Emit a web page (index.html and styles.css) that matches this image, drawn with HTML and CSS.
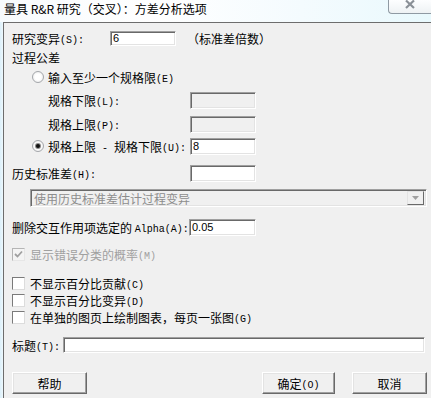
FILE: index.html
```html
<!DOCTYPE html>
<html>
<head>
    <meta charset="UTF-8">
    <title>方差分析选项</title>
    <link rel="stylesheet" href="styles.css">
</head>
<body>

<div class="titlebar">
    <div class="title">量具 R&amp;R 研究（交叉）：方差分析选项</div>
    <div class="close">
        <svg width="12" height="9" viewBox="0 0 12 9"><path d="M2 0.5 L10 8 M10 0.5 L2 8" stroke="#8a9097" stroke-width="2.2" fill="none"/></svg>
    </div>
</div>

<div class="dialog">
    <div class="row study">
        <span class="lbl w98">研究变异<span class="k">(S):</span></span>
        <input class="field short" type="text" value="6">
        <span class="hint">（标准差倍数）</span>
    </div>

    <div class="row tol">过程公差</div>

    <div class="row opt1">
        <span class="radio"></span>
        <span>输入至少一个规格限<span class="k">(E)</span></span>
    </div>
    <div class="row lsl indent">
        <span class="lbl w142">规格下限<span class="k">(L):</span></span>
        <input class="field" type="text" disabled>
    </div>
    <div class="row usl indent">
        <span class="lbl w142">规格上限<span class="k">(P):</span></span>
        <input class="field" type="text" disabled>
    </div>
    <div class="row opt2">
        <span class="radio on"></span>
        <span class="lbl w142">规格上限<span class="k"> - </span>规格下限<span class="k">(U):</span></span>
        <input class="field" type="text" value="8">
    </div>

    <div class="row hist">
        <span class="lbl w178">历史标准差<span class="k">(H):</span></span>
        <input class="field" type="text">
    </div>
    <div class="row pick">
        <div class="combo">
            <span class="combo-text">使用历史标准差估计过程变异</span>
            <span class="drop">
                <svg width="7" height="4" viewBox="0 0 7 4"><path d="M0 0 H7 L3.5 4 Z" fill="#a0a0a0"/></svg>
            </span>
        </div>
    </div>

    <div class="row alpha">
        <span class="lbl w177">删除交互作用项选定的 <span class="k">Alpha(A):</span></span>
        <input class="field wide" type="text" value="0.05">
    </div>

    <div class="row misclass off">
        <span class="box">
            <svg width="9" height="9" viewBox="0 0 9 9"><path d="M1 4 L3.5 6.5 L8 1.5" stroke="#a0a0a0" stroke-width="1.8" fill="none"/></svg>
        </span>
        <span>显示错误分类的概率<span class="k">(M)</span></span>
    </div>

    <div class="row chk first">
        <span class="box"></span>
        <span>不显示百分比贡献<span class="k">(C)</span></span>
    </div>
    <div class="row chk">
        <span class="box"></span>
        <span>不显示百分比变异<span class="k">(D)</span></span>
    </div>
    <div class="row chk">
        <span class="box"></span>
        <span>在单独的图页上绘制图表，每页一张图<span class="k">(G)</span></span>
    </div>

    <div class="row caption">
        <span class="lbl w51">标题<span class="k">(T):</span></span>
        <input class="field long" type="text">
    </div>

    <div class="row buttons">
        <button class="btn">帮助</button>
        <button class="btn ok">确定<span class="k">(O)</span></button>
        <button class="btn">取消</button>
    </div>
</div>

</body>
</html>
```

FILE: styles.css
```css
* {
    box-sizing: border-box;
}
body {
    margin: 0;
    width: 431px;
    height: 398px;
    overflow: hidden;
    background: linear-gradient(90deg, #dcf0fa, #f3fbfe 4px);
    font-family: "Noto Sans CJK SC", sans-serif;
    font-size: 12px;
    color: #000;
}
.titlebar {
    display: flex;
    height: 22px;
    background: linear-gradient(90deg, #f7fbfd 0%, #ffffff 35%, #f4fbfe 70%, #e9f9fd 100%);
}
.title {
    padding-left: 4px;
    line-height: 17px;
}
.close {
    margin-left: auto;
    width: 43px;
    height: 14px;
    border-left: 1px solid #8f9aa3;
    border-bottom: 1px solid #8f9aa3;
    border-bottom-left-radius: 4px;
    background: linear-gradient(#fdfeff, #eef2f4);
    display: flex;
    justify-content: center;
}
.dialog {
    margin-left: 3px;
    height: 376px;
    border-left: 1px solid #6d6d6d;
    border-top: 1px solid #6d6d6d;
    background: #f0f0f0;
    padding: 0 4px 0 8px;
}
.row {
    display: flex;
    align-items: center;
    height: 18px;
    white-space: nowrap;
}
.k {
    font-family: "Liberation Mono", monospace;
    font-size: 10px;
    vertical-align: 1px;
}
.lbl {
    flex: none;
}
.w98 { width: 98px; }
.w142 { width: 142px; }
.w178 { width: 178px; }
.w177 { width: 177px; }
.w51 { width: 51px; }

.study { margin-top: 6px; }
.tol { margin-top: 1px; }
.opt1 { margin-top: 2px; }
.lsl { margin-top: 5px; }
.usl { margin-top: 6px; }
.opt2 { margin-top: 4px; }
.hist { margin-top: 9px; }
.pick { margin-top: 7px; }
.alpha { margin-top: 11px; }
.misclass { margin-top: 9px; }
.chk { height: 17px; }
.chk.first { margin-top: 12px; }
.caption { margin-top: 10px; }
.buttons { margin-top: 18px; height: 22px; }

.indent {
    padding-left: 36px;
}
.hint {
    margin-left: 11px;
}

.field {
    flex: none;
    width: 66px;
    height: 17px;
    margin: 0;
    padding: 0 2px;
    border: 1px solid;
    border-color: #a0a0a0 #ffffff #ffffff #a0a0a0;
    box-shadow: inset 1px 1px #696969, inset -1px -1px #e3e3e3;
    background: #fff;
    font-family: "Liberation Sans", sans-serif;
    font-size: 11px;
    color: #000;
    outline: none;
}
.field.short {
    height: 15px;
}
.field.wide {
    width: 67px;
}
.field.long {
    width: 362px;
    height: 16px;
}
.field:disabled {
    background: #f0f0f0;
}

.radio {
    flex: none;
    width: 12px;
    height: 12px;
    margin: 0 4px 0 20px;
    border: 1px solid #a4a7ab;
    border-radius: 50%;
    background: radial-gradient(circle, #ffffff 40%, #e4e4e4 100%);
    display: flex;
    align-items: center;
    justify-content: center;
}
.radio.on::after {
    content: "";
    width: 4px;
    height: 4px;
    border-radius: 50%;
    background: #111;
    box-shadow: 0 0 0 1px #8a8a8a;
}

.box {
    flex: none;
    width: 13px;
    height: 13px;
    margin-right: 5px;
    border: 1px solid;
    border-color: #7a7a7a #dcdcdc #dcdcdc #7a7a7a;
    background: #fff;
    display: flex;
    align-items: center;
    justify-content: center;
}
.off {
    color: #a0a0a0;
}
.off .box {
    background: #f4f4f4;
    border-color: #b5b5b5 #e6e6e6 #e6e6e6 #b5b5b5;
}

.combo {
    margin-left: 18px;
    width: 397px;
    height: 18px;
    display: flex;
    align-items: center;
    border: 1px solid;
    border-color: #a0a0a0 #ffffff #ffffff #a0a0a0;
    box-shadow: inset 1px 1px #696969, inset -1px -1px #e3e3e3;
    background: #f0f0f0;
    padding: 0 2px 0 3px;
}
.combo-text {
    flex: 1;
    color: #8d8d8d;
}
.drop {
    width: 17px;
    height: 14px;
    border: 1px solid;
    border-color: #e3e3e3 #696969 #696969 #e3e3e3;
    display: flex;
    align-items: center;
    justify-content: center;
}

.btn {
    flex: none;
    width: 75px;
    height: 22px;
    padding: 0;
    border: 1px solid;
    border-color: #ffffff #696969 #696969 #ffffff;
    box-shadow: inset -1px -1px #a0a0a0, inset 1px 1px #e3e3e3;
    background: #f0f0f0;
    font-family: "Noto Sans CJK SC", sans-serif;
    font-size: 12px;
    color: #000;
}
.btn.ok {
    width: 73px;
    margin-left: auto;
    margin-right: 17px;
}
```
